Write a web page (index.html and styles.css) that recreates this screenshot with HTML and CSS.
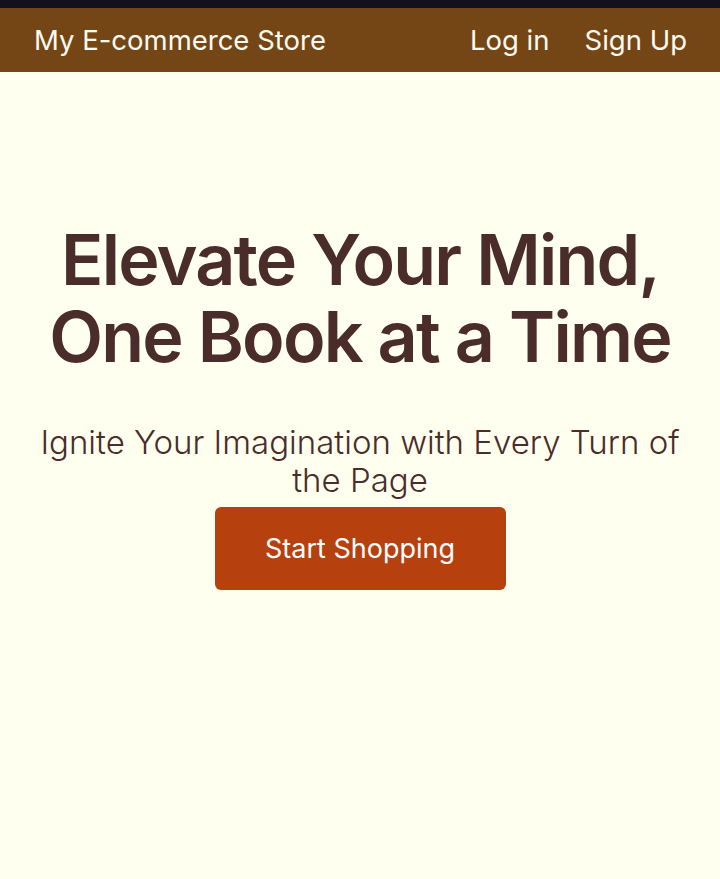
FILE: index.html
```html
<!DOCTYPE html>
<html>
<head>
<meta charset="utf-8">
<link rel="stylesheet" href="styles.css">
</head>
<body>
<div class="topbar"></div>
<nav class="nav">
  <a class="brand" href="#">My E-commerce Store</a>
  <div class="links">
    <a href="#">Log in</a>
    <a href="#">Sign Up</a>
  </div>
</nav>
<main class="hero">
  <h1 class="title">Elevate Your Mind, One Book at a Time</h1>
  <p class="subtitle">Ignite Your Imagination with Every Turn of the Page</p>
  <a class="cta" href="#">Start Shopping</a>
</main>
</body>
</html>
```
FILE: styles.css
```css
html, body {
  margin: 0;
  padding: 0;
  background: #fffff0;
  font-family: Inter, "Noto Sans", sans-serif;
  height: 100%;
}
.topbar {
  height: 8px;
  background: #15111c;
}
.nav {
  height: 64px;
  background: #744616;
  display: flex;
  align-items: center;
  justify-content: space-between;
  padding: 0 33px 0 34px;
}
.nav a {
  color: #fffaf0;
  text-decoration: none;
  font-size: 27.5px;
}
.links {
  display: flex;
  gap: 35px;
}
.hero {
  display: flex;
  flex-direction: column;
  align-items: center;
  text-align: center;
  padding: 149px 30px 0;
}
.title {
  margin: 0;
  font-size: 70px;
  font-weight: 600;
  line-height: 77px;
  letter-spacing: -1.8px;
  color: #4a2c2a;
}
.subtitle {
  margin: 48px 0 0;
  font-size: 33px;
  font-weight: 300;
  line-height: 38px;
  color: #4a2c2a;
}
.cta {
  margin-top: 8px;
  width: 291px;
  height: 83px;
  box-sizing: border-box;
  display: flex;
  align-items: center;
  justify-content: center;
  background: #b7410e;
  color: #fff;
  text-decoration: none;
  font-size: 27px;
  border-radius: 6px;
}
```
